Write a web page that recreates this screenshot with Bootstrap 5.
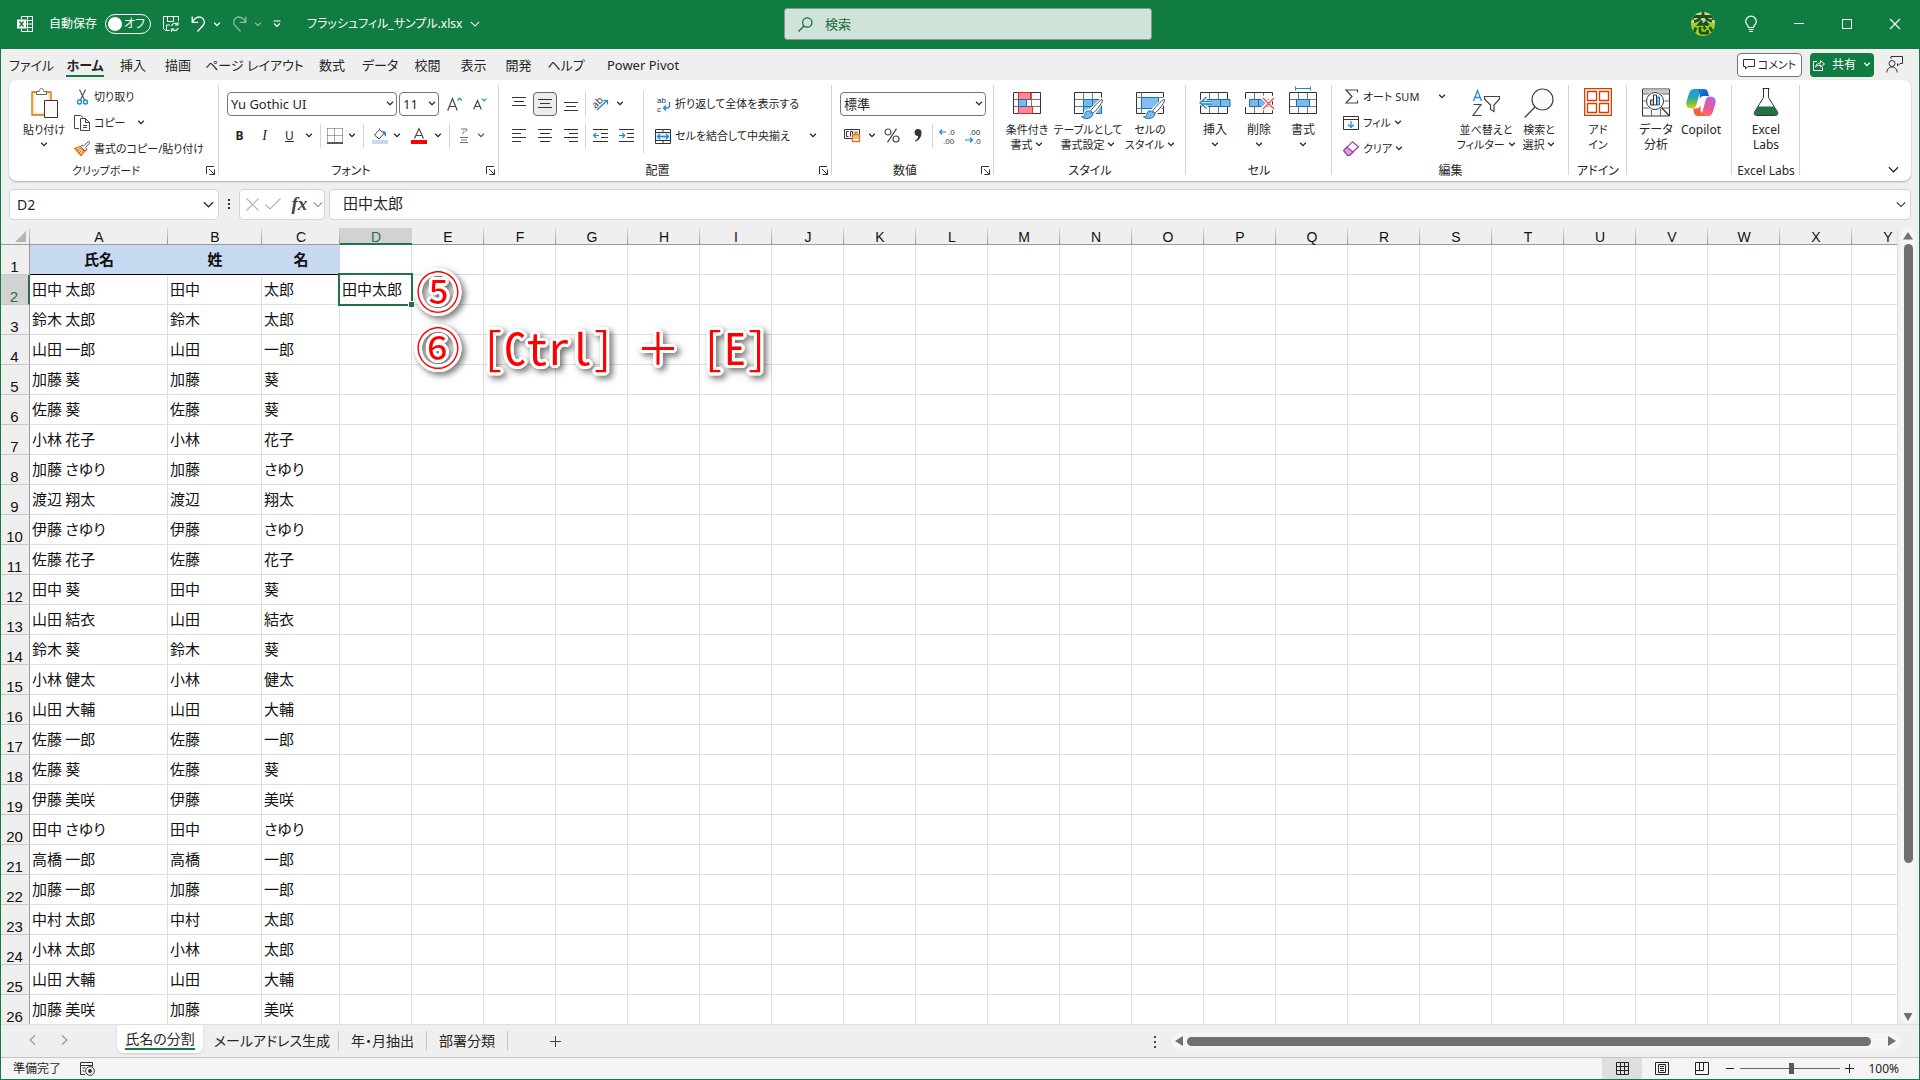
<!DOCTYPE html>
<html lang="ja">
<head>
<meta charset="utf-8">
<meta name="viewport" content="width=device-width, initial-scale=1">
<title>フラッシュフィル_サンプル.xlsx - Excel</title>
<link href="https://cdn.jsdelivr.net/npm/bootstrap@5.3.0/dist/css/bootstrap.min.css" rel="stylesheet">
<style>
:root{--xl-green:#107c41;--xl-sel:#217346;--xl-ink:#262626;--xl-line:#d4d4d4;--xl-bg:#efefef}
body{font-family:"Noto Sans","Noto Sans CJK JP",sans-serif;font-size:12px;line-height:16px;color:var(--xl-ink);background:var(--xl-bg);font-feature-settings:"palt"}
.xl-app{height:100vh;border:1px solid var(--xl-green);border-top:0;overflow:hidden}
button{background:none;border:0;padding:0;color:inherit;font:inherit;font-feature-settings:inherit;white-space:nowrap}
svg{display:block;flex:none;overflow:visible}
select,input{font-feature-settings:inherit}
/* title bar */
.xl-title{background:var(--xl-green);color:#fff;height:49px}
.xl-side{flex:1 1 0}
.xl-left{padding-left:16px}
.xl-toggle{width:46px;height:20px;border:1px solid #fff;border-radius:10px;padding:0 5px 0 2px}
.xl-toggle input{appearance:none;width:14px;height:14px;border-radius:50%;background:#fff;margin:0}
.xl-search{width:368px;height:32px;background:#cfe3d8;border:1px solid #8b938e;border-radius:3px;padding-left:13px;color:#1a6b40}
.xl-search input{background:none;border:0;outline:0;font-size:13px;color:#1a6b40;padding:0}
.xl-search input::placeholder{color:#1a6b40;opacity:1}
.xl-win{width:48px;height:48px}
/* ribbon tabs */
.xl-tabs{display:grid;grid-template-columns:55px 52px 44px 46px 107px 48px 48px 47px 45px 45px 50px 104px;padding-left:3px;font-size:13px}
.xl-tabs a{color:var(--xl-ink);text-decoration:none;white-space:nowrap;height:30px;line-height:16px;padding-top:8px;text-align:center}
.xl-tabs a.active span{font-weight:700;display:inline-block;padding-bottom:2px;border-bottom:2px solid var(--xl-green)}
.xl-cbtn{height:24px;border-radius:4px;padding:0 4px;gap:3px}
.xl-comment{width:65px;font-size:11px;justify-content:center}
.xl-share{width:64px;background:var(--xl-green);justify-content:center}
/* ribbon */
.xl-ribbon{background:#fff;border-radius:8px;margin:1px 8px 0;height:101px;box-shadow:0 1px 2px rgba(0,0,0,.28)}
.xl-group{position:relative;flex:none;height:101px}
.xl-group::after{content:"";position:absolute;right:0;top:5px;height:90px;width:1px;background:var(--xl-line)}
.xl-body{height:81px;display:flex}
.xl-cap{height:20px;line-height:20px;text-align:center}
.xl-cap.has-l{padding-right:16px}
.xl-launch{position:absolute;right:4px;bottom:6px}
.xl-big{padding-top:8px;display:flex;flex-direction:column;align-items:center}
.xl-big .ic{height:31px;margin-bottom:3px;display:flex;align-items:flex-start}
.xl-big .tx{line-height:15px;text-align:center}
.xl-big .tx svg{display:inline-block;vertical-align:2px}
.xl-big .dn{height:15px;display:flex;align-items:center}
.g-clip .tx,.g-style .tx,.g-edit .tx,.g-add .tx,.g-clip .xl-cap,.xl-three button,.xl-wide{font-size:11px}
.xl-three{padding-top:4px}
.xl-three>div{height:26px;display:flex;align-items:center}
.xl-three button{display:flex;align-items:center;gap:3px;padding-left:4px}
.xl-two{padding-top:8px}
.xl-two>div{height:32px;display:flex;align-items:center}
.xl-ib{width:26px;height:24px;display:inline-flex;align-items:center;justify-content:center;border-radius:4px;flex:none}
.xl-n{width:25px}.xl-s{width:20px}
.xl-in{margin-left:2px}
.xl-on{border:1px solid #666;background:#ebebeb;width:24px;margin:0 1px}
.xl-cv{width:14px;height:24px;display:inline-flex;align-items:center;justify-content:center;flex:none}
.xl-vs{width:1px;height:24px;background:var(--xl-line);margin:0 4px;flex:none}
.xl-vt{margin:0 1px}
.xl-tall{height:62px;margin-top:11px}
.xl-wide{display:flex;align-items:center;gap:4px;padding:1px 0 0 7px}
.xl-pick{height:24px;border:1px solid #767676;border-radius:4px;padding:0 16px 0 3px;font-size:13px;line-height:20px;color:var(--xl-ink);background:#fff url("data:image/svg+xml,%3Csvg xmlns='http://www.w3.org/2000/svg' viewBox='0 0 8 5'%3E%3Cpath d='M1 .8l3 3 3-3' fill='none' stroke='%23333' stroke-width='1.3'/%3E%3C/svg%3E") no-repeat right 2px center/8px 5px;appearance:none}
.w-font{width:170px}.w-size{width:40px;margin-left:2px}.w-num{width:146px}
.g-clip{width:210px}.g-clip .xl-body{padding-left:9px}
.g-font{width:280px}.g-align{width:333px}.g-num{width:162px}.g-style{width:192px}.g-cell{width:146px}.g-edit{width:237px}.g-add{width:58px}.g-data{width:105px}.g-labs{width:68px}
.g-align .xl-icons{padding-left:7px}
.g-cell .xl-body{padding-left:7px}
.g-edit .xl-body{padding-left:7px}.g-edit .xl-three{width:117px}
.bw-40{width:40px}.bw-44{width:44px}.bw-46{width:46px}.bw-50{width:50px}.bw-52{width:52px}.bw-60{width:60px}.bw-72{width:72px}
.xl-serif{font-family:"Liberation Serif",serif;font-style:italic;font-size:14px}
/* formula bar */
.xl-fbar{margin:8px 8px 0;height:31px}
.xl-box{background:#fff;border:1px solid var(--xl-line);border-radius:4px;height:31px}
.xl-box input{border:0;outline:0;background:none;padding:0;color:var(--xl-ink)}
.xl-name{width:210px;padding:0 4px 0 7px}.xl-name input{font-size:14px;width:150px;padding-top:2px}
.xl-fx{width:86px;padding:0 1px 0 6px}.xl-fx button{font-size:19px;font-weight:700;color:#444;margin-left:5px}
.xl-formula{padding:0 4px 0 13px;margin-left:4px}.xl-formula input{font-size:15px;padding-bottom:3px}
/* grid */
.xl-grid{margin-top:8px;min-height:0}
.xl-view{overflow:hidden;background:#fff;position:relative;border-right:1px solid #e0e0e0}
.xl-sheet{table-layout:fixed;border-collapse:separate;border-spacing:0;width:0;font:15px/20px "Noto Sans CJK JP",sans-serif;font-feature-settings:"palt";color:#111}
.xl-sheet col{width:72px}
.xl-sheet col.c-n{width:29px}.xl-sheet col.c-a{width:138px}.xl-sheet col.c-b{width:94px}.xl-sheet col.c-c{width:78px}
.xl-sheet th,.xl-sheet td{padding:0;white-space:nowrap;border:0 solid #dedede;font-weight:400}
.xl-sheet thead th{height:17px;padding-top:2px;line-height:14px;font-family:"Liberation Sans",sans-serif;font-size:14px;text-align:center;border-bottom:1px solid #9b9b9b;background:linear-gradient(#d8d8d8,#9b9b9b) right/1px 100% no-repeat var(--xl-bg)}
.xl-sheet thead th:first-child{padding-top:0}
.xl-sheet thead th.on{background:#d2d2d2;color:#217346;border-bottom-color:var(--xl-sel);box-shadow:inset 0 -1px var(--xl-sel)}
.xl-sheet tbody th{height:30px;font-family:"Liberation Sans",sans-serif;font-size:15px;line-height:14px;text-align:center;vertical-align:bottom;background:var(--xl-bg);border-right:1px solid #9b9b9b;border-bottom:1px solid #c8c8c8;padding-right:1px}
.xl-sheet tbody th.on{background:#d2d2d2;color:#217346;border-right:2px solid var(--xl-sel)}
.xl-sheet td{border-width:0 1px 1px 0;padding-left:2px;vertical-align:middle}
.xl-sheet td.hd{background:#c6d9f1;border-color:#000;border-right:0;text-align:center;font-weight:700;padding:0}
.xl-sheet td.cur{position:relative}
.xl-sheet td.cur::before{content:"";position:absolute;inset:-2px;border:2px solid var(--xl-sel)}
.xl-sheet td.cur::after{content:"";position:absolute;right:-3px;bottom:-3px;width:6px;height:6px;background:var(--xl-sel);border:solid #fff;border-width:1px 0 0 1px}
.xl-note{position:absolute;left:415px;top:34px;font:44px/56px "Noto Sans CJK JP",sans-serif;font-feature-settings:"hwid";color:#f00;white-space:pre;pointer-events:none;filter:drop-shadow(3px 3px 3px rgba(0,0,0,.55));
text-shadow:3px 0 #fff,-3px 0 #fff,0 3px #fff,0 -3px #fff,2px 2px #fff,-2px 2px #fff,2px -2px #fff,-2px -2px #fff,1px 3px #fff,-1px 3px #fff,1px -3px #fff,-1px -3px #fff,3px 1px #fff,-3px 1px #fff,3px -1px #fff,-3px -1px #fff}
.xl-full{font-feature-settings:"fwid"}
.xl-vbar{width:21px;padding:0 3px 0 2px}
.xl-vbar>div{background:#f5f5f5;border-radius:8px;padding:4px 0 3px;height:100%}
.xl-vthumb{width:9px;background:#707070;border-radius:5px;flex:0 0 619px;margin-top:4px}
/* sheet tabs */
.xl-sheets{height:33px;border-top:1px solid #e0e0e0;font-size:14px;padding-right:18px}
.xl-nav{width:116px;height:30px;padding-left:28px;gap:25px}
.xl-sheets a{color:var(--xl-ink);text-decoration:none;text-align:center;white-space:nowrap;height:20px;line-height:20px;margin-top:6px;border-right:1px solid #c8c8c8}
.xl-sheets a.active{background:#fff;height:28px;margin:0 3px 0 0;padding-top:4px;border:0;border-radius:0 0 6px 6px;width:86px;box-shadow:0 1px 2px rgba(0,0,0,.15)}
.xl-sheets a.active span{display:inline-block;border-bottom:2px solid var(--xl-green);line-height:19px;height:21px}
.xl-t2{width:133px}.xl-t3{width:88px}.xl-t4{width:81px}
.xl-plus{margin:11px 0 0 42px}
.xl-dots{margin:11px 14px 0 auto}
.xl-hbar{width:730px;height:16px;background:#f5f5f5;border-radius:8px;margin-top:8px;padding:0 5px 0 4px}
.xl-hthumb{height:9px;flex:0 0 684px;background:#707070;border-radius:5px;margin-left:4px}
.xl-status{height:22px;background:#f4f4f4;border-top:1px solid #c6c6c6;padding:0 20px 0 12px}
.xl-rec{margin-left:19px}
.xl-vw{width:40px;height:21px;display:flex;align-items:center;justify-content:center}
.xl-vw.on{background:#dfdfdf}
.xl-zoom{appearance:none;width:100px;height:20px;background:linear-gradient(#666,#666) center/100% 1px no-repeat;margin:0 5px}
.xl-zoom::-webkit-slider-thumb{appearance:none;width:5px;height:11px;background:#595959}
.xl-pct{width:45px}
.tiny{font:8px "Liberation Sans",sans-serif;fill:#333}
</style>
<script src="https://cdn.jsdelivr.net/npm/bootstrap@5.3.0/dist/js/bootstrap.bundle.min.js"></script>
</head>
<body>
<svg width="0" height="0" class="position-absolute" aria-hidden="true">
<defs>
<symbol id="cv" viewBox="0 0 8 5"><path d="M1.2.8L4 3.6 6.8.8" fill="none" stroke="currentColor" stroke-width="1.3"/></symbol>
<symbol id="cvl" viewBox="0 0 12 7"><path d="M1 1l5 5 5-5" fill="none" stroke="currentColor" stroke-width="1.3"/></symbol>
<symbol id="la" viewBox="0 0 9 9"><path d="M8 .5H.5V8M3 3l5 5M8.500 3.500v5h-5" fill="none" stroke="#333"/></symbol>
<symbol id="grid" viewBox="0 0 28 22"><path d="M.5.5h27v21H.500z" fill="#fafafa"/><path d="M9.500.5v21M18.500.5v21M.5 7.500h27M.5 14.500h27" stroke="#777" fill="none"/><path d="M.5.5h27v21H.500z" fill="none" stroke="#333"/></symbol>
<symbol id="brush" viewBox="0 0 24 24"><path d="M22 3L9.500 15.500l3 3L22 5.500c1-1.500 0-2.500 0-2.500z" fill="#fff" stroke="#fff" stroke-width="4"/><path d="M9 14c-3-.5-4.500 2-4.500 4S3 20.500 1 20.500c3 3.500 11 3 12-3z" fill="#7cb8ea" stroke="#fff" stroke-width="3"/><path d="M22.500 2.500c-3 1.500-9 8-12 12l2.500 2.500c4-3.500 9-10 10-13 .3-1-.5-1.500-.5-1.500z" fill="#fff" stroke="#444"/><path d="M9 14.500c-3-.5-4.500 1.500-4.500 3.500S3 20.500 1 20.500c3 3 11 3 12-3z" fill="#7cb8ea" stroke="#1272bd"/></symbol>
</defs>
</svg>

<div class="xl-app d-flex flex-column">
<header class="xl-title d-flex align-items-center">
 <div class="xl-side xl-left d-flex align-items-center">
  <svg width="16" height="16" viewBox="0 0 16 16"><path d="M4.500 3V.5h11v15h-11V13M10.500.5v15M4.500 4.500h11M9 8h6.500M4.500 11.500h11" fill="none" stroke="#fff"/><path d="M0 3.500h9v9H0z" fill="#fff"/><path d="M2.500 5.500l4 5M6.500 5.500l-4 5" stroke="#107c41" stroke-width="1.400"/></svg>
  <label for="autosave" class="ms-3">自動保存</label>
  <span class="xl-toggle d-flex align-items-center justify-content-between ms-2"><input type="checkbox" id="autosave" role="switch"><span>オフ</span></span>
  <button class="ms-2 ps-1" aria-label="保存"><svg width="16" height="16" viewBox="0 0 16 16"><path d="M15.500 5V.5H.5v12l2 2H7M4.500.5v5h6v-5M3.500 14v-5H7" fill="none" stroke="#fff"/><path d="M8.500 10a3.500 3.500 0 0 1 6-1.500M15 6v3h-3M15 12a3.500 3.500 0 0 1-6 1.500M8.500 16v-3h3" fill="none" stroke="#fff" stroke-width="1.100"/></svg></button>
  <button class="ms-2 ps-1 xl-undo" aria-label="元に戻す"><svg width="15" height="16" viewBox="0 0 14 16"><path d="M.7.5v5.800h6M1 6c2-4 6-6 9-4.500 3.500 2 3.500 5.500 1.500 8L6 15.500" fill="none" stroke="#fff" stroke-width="1.300"/></svg></button>
  <span class="xl-cv ms-1"><svg width="8" height="5"><use href="#cv"/></svg></span>
  <button class="ms-2 opacity-50" aria-label="やり直し"><svg width="15" height="16" viewBox="0 0 14 16"><path d="M13.300.5v5.800h-6M13 6C11 2 7 0 4 1.500 .5 3.500.5 7 2.500 9.500L8 15.500" fill="none" stroke="#fff" stroke-width="1.300"/></svg></button>
  <span class="xl-cv ms-1 opacity-50"><svg width="8" height="5"><use href="#cv"/></svg></span>
  <button class="ms-2" aria-label="クイック アクセス"><svg width="8" height="8" viewBox="0 0 8 8"><path d="M.5 1h7M1.200 3.500L4 6.300l2.800-2.800" fill="none" stroke="#fff" stroke-width="1.200"/></svg></button>
  <button class="ms-4 xl-in d-flex align-items-center gap-2"><span class="xl-in">フラッシュフィル_サンプル.xlsx</span><svg width="10" height="6"><use href="#cvl"/></svg></button>
 </div>
 <div class="xl-search d-flex align-items-center">
  <svg width="15" height="15" viewBox="0 0 15 15" class="me-2"><path d="M.5 14.500l5.500-5.500" stroke="#1a6b40" stroke-width="1.200"/><circle cx="9.300" cy="5.500" r="4.700" fill="none" stroke="#1a6b40" stroke-width="1.200"/></svg>
  <input type="search" aria-label="検索" placeholder="検索" class="ms-1">
 </div>
 <div class="xl-side d-flex align-items-center justify-content-end">
  <button aria-label="アカウント" class="me-2"><svg width="24" height="24" viewBox="0 0 24 24"><defs><clipPath id="av"><circle cx="12" cy="12" r="12"/></clipPath></defs><g clip-path="url(#av)"><path d="M0 0h24v24H0z" fill="#9fce1f"/><path d="M0 0h24v11H0z" fill="#c5d89a"/><path d="M12 0v4M1.500 7.500V4.500h21V8M9 5.500C8.500 8 6 9 3 9.500M15 5.500c.5 2.500 2.500 3 6 3.500M11 8.500L8 12.500l8-.5M14 9.500l3.500 4M5 15.500l-2 5M9 15v3.500c0 3 2 3 7.500 2.500V18M12.500 14.500l2 3M18.500 15l3 4.500" fill="none" stroke="#1f5219" stroke-width="2.800"/></g></svg></button>
  <button class="xl-win d-flex align-items-center justify-content-center ms-1" aria-label="ヒント"><svg width="12" height="16" viewBox="0 0 12 16"><path d="M3.500 11.500C3.500 9 .7 8.500.7 5.500a5.300 5.300 0 0 1 10.600 0c0 3-2.800 3.500-2.800 6zM3.500 13.500h5M4.200 15.500h3.600" fill="none" stroke="#fff" stroke-width="1.200"/></svg></button>
  <button class="xl-win d-flex align-items-center justify-content-center" aria-label="最小化"><svg width="10" height="10"><path d="M0 4.500h10" stroke="#fff"/></svg></button>
  <button class="xl-win d-flex align-items-center justify-content-center" aria-label="最大化"><svg width="10" height="10"><path d="M.5.5h9v9h-9z" fill="none" stroke="#fff"/></svg></button>
  <button class="xl-win d-flex align-items-center justify-content-center" aria-label="閉じる"><svg width="10" height="10"><path d="M0 0l10 10M10 0L0 10" stroke="#fff" stroke-width="1.200"/></svg></button>
 </div>
</header>

<div class="d-flex align-items-start justify-content-between">
 <nav class="xl-tabs">
  <a href="#">ファイル</a><a href="#" class="active"><span>ホーム</span></a><a href="#">挿入</a><a href="#">描画</a><a href="#">ページ レイアウト</a><a href="#">数式</a><a href="#">データ</a><a href="#">校閲</a><a href="#">表示</a><a href="#">開発</a><a href="#">ヘルプ</a><a href="#">Power Pivot</a>
 </nav>
 <div class="d-flex align-items-center gap-2 pt-1 pe-3">
  <button class="xl-cbtn xl-comment d-flex align-items-center bg-white border border-secondary"><svg width="12" height="11" viewBox="0 0 12 11"><path d="M.5.5h11v7H5L2.500 10V7.500h-2z" fill="none" stroke="#333"/></svg>コメント</button>
  <button class="xl-cbtn xl-share d-flex align-items-center text-white"><svg width="12" height="12" viewBox="0 0 12 12"><path d="M4 2.500H.5v9h9V8M2.500 8c.5-3 3-4 5-4V1.500L11.500 5 7.500 8V6c-2 0-3.500.5-5 2z" fill="none" stroke="#fff"/></svg><span class="mx-1">共有</span><svg width="8" height="5"><use href="#cv"/></svg></button>
  <button aria-label="フィードバック" class="ms-1"><svg width="17" height="17" viewBox="0 0 17 17"><circle cx="6" cy="7.500" r="3" fill="none" stroke="#333"/><path d="M.7 16.500c.5-4 2.800-5.500 5.300-5.500s4.800 1.500 5.300 5.500M5 3V.5h11.500v7H14L11.500 10V7.500" fill="none" stroke="#333"/></svg></button>
 </div>
</div>

<section class="xl-ribbon d-flex">
 <div class="xl-group g-clip">
  <div class="xl-body">
   <button class="xl-big bw-52"><span class="ic"><svg width="27" height="30" viewBox="0 0 27 30"><path d="M1 4h19v23H1z" fill="#fbe3b9" stroke="#d9730d" stroke-width="1.300"/><path d="M3.500 6.500h14v18h-14z" fill="#fff"/><path d="M5.500 6.500v-3h2.700c.3-4 4.300-4 4.600 0h2.700v3z" fill="#fff" stroke="#666"/><path d="M13.500 12.500h13v17h-13z" fill="#fafafa" stroke="#333"/></svg></span><span class="tx">貼り付け</span><span class="dn"><svg width="8" height="5"><use href="#cv"/></svg></span></button>
   <div class="xl-three">
    <div><button><svg width="17" height="16" viewBox="0 0 17 16"><path d="M5.500.5l5 10.500M11.500.5l-5 10.500" stroke="#555" stroke-width="1.200"/><circle cx="5.500" cy="13" r="2" fill="none" stroke="#1e88d0" stroke-width="1.300"/><circle cx="11.500" cy="13" r="2" fill="none" stroke="#1e88d0" stroke-width="1.300"/></svg>切り取り</button></div>
    <div><button><svg width="17" height="16" viewBox="0 0 17 16"><path d="M5 13.500H.5V.5h6l2.500 2M6.500 3.500h5l4 4v8h-9zM11.500 3.500v4h4M9 10.500h4M9 12.500h4" fill="none" stroke="#444"/></svg>コピー</button><span class="xl-cv ms-2"><svg width="8" height="5"><use href="#cv"/></svg></span></div>
    <div><button><svg width="17" height="16" viewBox="0 0 17 16"><path d="M9.500 5L14 .8c1-.8 2.200.4 1.400 1.400L11.500 6.500l1.500 2-2 1.500L6.500 5.500 8 4z" fill="#fff" stroke="#555"/><path d="M6 5.500L.8 7.500 7 14.500l3.500-4z" fill="#f8c48a" stroke="#d9730d" stroke-width="1.200"/><path d="M2.500 9.500l3-1M4.500 12l3-2" stroke="#d9730d"/></svg>書式のコピー/貼り付け</button></div>
   </div>
  </div>
  <div class="xl-cap has-l">クリップボード</div><svg class="xl-launch" width="9" height="9"><use href="#la"/></svg>
 </div>

 <div class="xl-group g-font">
  <div class="xl-body"><div class="xl-two ps-2">
   <div><select class="xl-pick w-font" aria-label="フォント"><option>Yu Gothic UI</option></select><select class="xl-pick w-size" aria-label="サイズ"><option>11</option></select>
    <button class="xl-ib xl-in" aria-label="拡大"><svg width="15" height="14" viewBox="0 0 15 14"><path d="M.7 13.500L5.500 1.500l4.800 12M2.300 9.500h6.400" fill="none" stroke="#444" stroke-width="1.200"/><path d="M10.500 3.500L12.700 1.200l2.200 2.300" fill="none" stroke="#1e88d0" stroke-width="1.200"/></svg></button>
    <button class="xl-ib" aria-label="縮小"><svg width="14" height="12" viewBox="0 0 14 12"><path d="M.7 11.500L4.500 2.500l3.800 9M2 8.500h5" fill="none" stroke="#444" stroke-width="1.200"/><path d="M9 .7L11.200 3 13.400.7" fill="none" stroke="#1e88d0" stroke-width="1.200"/></svg></button></div>
   <div><button class="xl-ib xl-n fw-bold">B</button><button class="xl-ib xl-n xl-serif">I</button><button class="xl-ib xl-n text-decoration-underline">U</button><span class="xl-cv"><svg width="8" height="5"><use href="#cv"/></svg></span><i class="xl-vs"></i>
    <button class="xl-ib xl-s" aria-label="罫線"><svg width="16" height="16" viewBox="0 0 16 16"><path d="M.5.5h15M.5 7.500h15M.5.5v13M7.500.5v13M15.500.5v13" stroke="#555" stroke-dasharray="1 1" fill="none"/><path d="M0 15h16" stroke="#222" stroke-width="1.500"/></svg></button><span class="xl-cv"><svg width="8" height="5"><use href="#cv"/></svg></span><i class="xl-vs"></i>
    <button class="xl-ib xl-s xl-in" aria-label="塗りつぶし"><svg width="16" height="16" viewBox="0 0 16 16"><path d="M7.500 1.500L2.500 7l4.500 4 5-5.500zM7.500 1.500V.5" fill="#fff" stroke="#444"/><path d="M10.500 3c3 0 4 2 3.500 6-1-1-2-3-2-4z" fill="#1e6fb8"/><path d="M0 12h16v4H0z" fill="#c6d9f1"/></svg></button><span class="xl-cv"><svg width="8" height="5"><use href="#cv"/></svg></span>
    <button class="xl-ib xl-n xl-in" aria-label="文字色"><svg width="16" height="16" viewBox="0 0 16 16"><path d="M3.500 10.500L8 .5l4.500 10M5 7.500h6" fill="none" stroke="#444" stroke-width="1.100"/><path d="M0 12h16v4H0z" fill="#f00"/></svg></button><span class="xl-cv"><svg width="8" height="5"><use href="#cv"/></svg></span><i class="xl-vs"></i>
    <button class="xl-ib xl-s opacity-75" aria-label="ふりがな"><svg width="10" height="16" viewBox="0 0 10 16"><path d="M2 1h6c0 1.500-1 2.500-2 3M5 2.500c0 2-.7 3-2 3.800M1 9.500h8M2 12h6M1 14.500h8" fill="none" stroke="#444"/></svg></button><span class="xl-cv opacity-75"><svg width="8" height="5"><use href="#cv"/></svg></span></div>
  </div></div>
  <div class="xl-cap has-l">フォント</div><svg class="xl-launch" width="9" height="9"><use href="#la"/></svg>
 </div>

 <div class="xl-group g-align">
  <div class="xl-body"><div class="xl-two xl-icons">
   <div><button class="xl-ib" aria-label="上揃え"><svg width="14" height="14"><path d="M0 .5h14M2 4.500h10M0 8.500h14" stroke="#333"/></svg></button><button class="xl-ib xl-on" aria-label="中央"><svg width="14" height="14"><path d="M0 2.500h14M2 6.500h10M0 10.500h14" stroke="#333"/></svg></button><button class="xl-ib" aria-label="下揃え"><svg width="14" height="14"><path d="M0 5.500h14M2 9.500h10M0 13.500h14" stroke="#333"/></svg></button><i class="xl-vs xl-vt"></i><button class="xl-ib" aria-label="方向"><svg width="17" height="15" viewBox="0 0 17 15"><text x="-1" y="10" font-size="10" fill="#444" transform="rotate(-45 5 6)">ab</text><path d="M5 14L15 4.500M11.500 4.500H15.500V8.500" fill="none" stroke="#1e88d0" stroke-width="1.200"/></svg></button><span class="xl-cv"><svg width="8" height="5"><use href="#cv"/></svg></span></div>
   <div><button class="xl-ib" aria-label="左揃え"><svg width="14" height="14"><path d="M0 .5h14M0 4.500h9M0 8.500h14M0 12.500h9" stroke="#333"/></svg></button><button class="xl-ib" aria-label="中央揃え"><svg width="14" height="14"><path d="M0 .5h14M2 4.500h10M0 8.500h14M2 12.500h10" stroke="#333"/></svg></button><button class="xl-ib" aria-label="右揃え"><svg width="14" height="14"><path d="M0 .5h14M5 4.500h9M0 8.500h14M5 12.500h9" stroke="#333"/></svg></button><i class="xl-vs xl-vt"></i><button class="xl-ib" aria-label="インデント減"><svg width="15" height="14"><path d="M0 .5h15M8 4.500h7M8 8.500h7M0 12.500h15" stroke="#333"/><path d="M6 6.500H.7M3 4L.6 6.500 3 9" fill="none" stroke="#1e88d0" stroke-width="1.200"/></svg></button><button class="xl-ib" aria-label="インデント増"><svg width="15" height="14"><path d="M0 .5h15M8 4.500h7M8 8.500h7M0 12.500h15" stroke="#333"/><path d="M0 6.500h5.500M3.300 4l2.400 2.500L3.300 9" fill="none" stroke="#1e88d0" stroke-width="1.200"/></svg></button></div>
  </div>
  <i class="xl-vs xl-tall"></i>
  <div class="xl-two">
   <div><button class="xl-wide"><svg width="16" height="16" viewBox="0 0 16 16"><text class="tiny" x="2" y="7">ab</text><text class="tiny" x="2" y="16">c</text><path d="M14.500 6v3.500c0 2-1 2.500-3 2.500H8.500M11 9.500L8.500 12l2.500 2.500" fill="none" stroke="#1e88d0" stroke-width="1.300"/></svg>折り返して全体を表示する</button></div>
   <div><button class="xl-wide"><svg width="16" height="15" viewBox="0 0 16 15"><path d="M.5.5h15v14H.500zM.5 3.500h15M.5 11.500h15M8 .5v3M8 11.500v3" fill="#fff" stroke="#333"/><path d="M1 4h14v7H1z" fill="#dbeefc"/><path d="M2.500 7.500h11M5 5L2.500 7.500 5 10M11 5l2.500 2.500L11 10" fill="none" stroke="#1e88d0" stroke-width="1.300"/></svg>セルを結合して中央揃え</button><span class="xl-cv ms-3"><svg width="8" height="5"><use href="#cv"/></svg></span></div>
  </div></div>
  <div class="xl-cap has-l">配置</div><svg class="xl-launch" width="9" height="9"><use href="#la"/></svg>
 </div>

 <div class="xl-group g-num">
  <div class="xl-body"><div class="xl-two ps-2">
   <div><select class="xl-pick w-num" aria-label="表示形式"><option>標準</option></select></div>
   <div><button class="xl-ib xl-n" aria-label="通貨"><svg width="17" height="15" viewBox="0 0 17 15"><path d="M.5 1.500h15v9H.500z" fill="#fff" stroke="#333"/><path d="M4.500 3.500h-2v5h2M6.500 8.500v-5h2v5M11 3.500v3M13 3.500v2" fill="none" stroke="#333"/><path d="M8.500 6.500h7v7h-7z" fill="#fff" stroke="#e07b1a" stroke-width="1.400"/><path d="M8.500 10h7M8.500 8h7" stroke="#e07b1a"/></svg></button><span class="xl-cv"><svg width="8" height="5"><use href="#cv"/></svg></span><button class="xl-ib" aria-label="パーセント"><svg width="16" height="15" viewBox="0 0 16 15"><circle cx="4" cy="4" r="3" fill="none" stroke="#444" stroke-width="1.200"/><circle cx="12" cy="11" r="3" fill="none" stroke="#444" stroke-width="1.200"/><path d="M12.500.7L3.500 14.300" stroke="#444" stroke-width="1.200"/></svg></button><button class="xl-ib" aria-label="桁区切り"><svg width="8" height="13" viewBox="0 0 8 13"><path d="M4 0a3.500 3.500 0 0 1 3.500 3.500C7.500 8 5 11.500 1.500 12.500L1 11.500c2-1 3-2.500 3.200-4.500A3.500 3.500 0 1 1 4 0z" fill="#333"/></svg></button><i class="xl-vs xl-vt"></i><button class="xl-ib" aria-label="小数点以下を増やす"><svg width="16" height="16" viewBox="0 0 16 16"><path d="M7 4H.7M3.200 1.500L.7 4l2.500 2.500" fill="none" stroke="#1e88d0" stroke-width="1.200"/><text class="tiny" x="9" y="7">.0</text><text class="tiny" x="4" y="16">.00</text></svg></button><button class="xl-ib" aria-label="小数点以下を減らす"><svg width="16" height="16" viewBox="0 0 16 16"><path d="M0 12h7.500M5 9.500L7.500 12 5 14.500" fill="none" stroke="#1e88d0" stroke-width="1.200"/><text class="tiny" x="4" y="7">.00</text><text class="tiny" x="9" y="16">.0</text></svg></button></div>
  </div></div>
  <div class="xl-cap has-l">数値</div><svg class="xl-launch" width="9" height="9"><use href="#la"/></svg>
 </div>

 <div class="xl-group g-style">
  <div class="xl-body ps-2">
   <button class="xl-big bw-50"><span class="ic pt-1"><svg width="28" height="22"><use href="#grid"/><path d="M5.500.5h12v7h-12zM5.500 14.500h14v7h-14z" fill="#ff8a8f" stroke="#d92b2b"/><path d="M5.500 7.500h8v7h-8z" fill="#7cb8ea" stroke="#1272bd"/></svg></span><span class="tx">条件付き<br>書式 <svg width="8" height="5"><use href="#cv"/></svg></span></button>
   <button class="xl-big bw-72"><span class="ic pt-1"><svg width="28" height="27"><use href="#grid" width="28" height="22"/><path d="M9.500 7.500h18v14h-18z" fill="#7cb8ea"/><path d="M9.500 14.500h18M18.500 7.500v14M9.500 21.500v-14h18v14z" fill="none" stroke="#1272bd"/><use href="#brush" x="6" y="5" width="24" height="23"/></svg></span><span class="tx">テーブルとして<br>書式設定 <svg width="8" height="5"><use href="#cv"/></svg></span></button>
   <button class="xl-big bw-52"><span class="ic pt-1"><svg width="28" height="27"><path d="M.5.5h27v21H.500z" fill="#fafafa" stroke="#333"/><path d="M5.500.5v21M.5 5.500h27M.5 16.500h27" stroke="#777"/><path d="M5.500 5.500h17v11h-17z" fill="#84bdee" stroke="#1272bd"/><use href="#brush" x="6" y="5" width="24" height="23"/></svg></span><span class="tx">セルの<br>スタイル <svg width="8" height="5"><use href="#cv"/></svg></span></button>
  </div>
  <div class="xl-cap">スタイル</div>
 </div>

 <div class="xl-group g-cell">
  <div class="xl-body">
   <button class="xl-big bw-44"><span class="ic pt-1"><svg width="30" height="22"><use href="#grid" width="28" height="22"/><path d="M6 7.500h24v7H6z" fill="#7cb8ea" stroke="#1272bd"/><path d="M12 10.500H1M7 4.500L.5 10.500 7 16.500" fill="none" stroke="#fff" stroke-width="4"/><path d="M12 9.500H1.500M12 12H1.500M6.500 5L0 10.700l6.500 5.700" fill="none" stroke="#1e88d0" stroke-width="1.300"/><path d="M20.500 7.500v7" stroke="#1272bd"/></svg></span><span class="tx">挿入</span><span class="dn"><svg width="8" height="5"><use href="#cv"/></svg></span></button>
   <button class="xl-big bw-44"><span class="ic pt-1"><svg width="28" height="22"><use href="#grid" width="28" height="22"/><path d="M0 7h5v8H0z" fill="#fff"/><path d="M4.500 7.500h12l4 3.500-4 3.500h-12zM13.500 7.500v7" fill="#7cb8ea" stroke="#1272bd"/><path d="M17 5l12 12M29 5L17 17" stroke="#fff" stroke-width="4"/><path d="M18 6l11 11M29 6L18 17" stroke="#f0524f" stroke-width="1.400"/></svg></span><span class="tx">削除</span><span class="dn"><svg width="8" height="5"><use href="#cv"/></svg></span></button>
   <button class="xl-big bw-44"><span class="ic pt-1"><svg width="28" height="22"><use href="#grid"/><path d="M7.500 7.500h13v7h-13z" fill="#7cb8ea" stroke="#1272bd"/><path d="M6.500-3.500h15M6.500-5.500v4M21.500-5.500v4" stroke="#1e88d0"/></svg></span><span class="tx">書式</span><span class="dn"><svg width="8" height="5"><use href="#cv"/></svg></span></button>
  </div>
  <div class="xl-cap">セル</div>
 </div>

 <div class="xl-group g-edit">
  <div class="xl-body">
   <div class="xl-three">
    <div><button><svg width="17" height="16" viewBox="0 0 17 16"><path d="M14.500 3.500V1H3l6 6.500L3 14h11.500v-2.500" fill="none" stroke="#444" stroke-width="1.200"/></svg>オート SUM</button><span class="xl-cv ms-3"><svg width="8" height="5"><use href="#cv"/></svg></span></div>
    <div><button><svg width="17" height="14" viewBox="0 0 17 14"><path d="M.5.5h15v13H.500zM.5 3.500h15" fill="none" stroke="#333"/><path d="M8 5v6.500M5 8.500l3 3 3-3" fill="none" stroke="#1e88d0" stroke-width="1.200"/></svg>フィル <svg width="8" height="5"><use href="#cv"/></svg></button></div>
    <div><button><svg width="17" height="15" viewBox="0 0 17 15"><path d="M.7 9.500L9.500.7l6 5L6.500 14.300H4.500z" fill="#fff" stroke="#9b3fa5" stroke-width="1.200"/><path d="M.7 9.500l3.300-3.500 6 5-3.500 3.300h-2z" fill="#d9a6dd" stroke="#9b3fa5" stroke-width="1.200"/></svg>クリア <svg width="8" height="5"><use href="#cv"/></svg></button></div>
   </div>
   <button class="xl-big bw-60"><span class="ic"><svg width="28" height="28" viewBox="0 0 28 28"><path d="M1.500 13L5.500 2.500 9.500 13M2.800 9.500h5.400" fill="none" stroke="#1e88d0" stroke-width="1.300"/><path d="M1.500 16.500h7.500L1 27.500h8.500" fill="none" stroke="#444" stroke-width="1.200"/><path d="M12.500 8.500h15v2.500l-5.500 6v6.500l-3.500-2v-4.500l-6-6z" fill="#fafafa" stroke="#444" stroke-width="1.200"/></svg></span><span class="tx">並べ替えと<br>フィルター <svg width="8" height="5"><use href="#cv"/></svg></span></button>
   <button class="xl-big bw-46"><span class="ic"><svg width="30" height="30" viewBox="0 0 30 30"><circle cx="18.500" cy="11.500" r="10.500" fill="#fafafa" stroke="#444" stroke-width="1.200"/><path d="M11 19L.7 29.500" stroke="#444" stroke-width="1.300"/></svg></span><span class="tx">検索と<br>選択 <svg width="8" height="5"><use href="#cv"/></svg></span></button>
  </div>
  <div class="xl-cap">編集</div>
 </div>

 <div class="xl-group g-add">
  <div class="xl-body justify-content-center"><button class="xl-big"><span class="ic"><svg width="28" height="28" viewBox="0 0 28 28"><path d="M.7.7h26.600v26.600H.700z" fill="#fff" stroke="#d83b01" stroke-width="1.300"/><path d="M3.500 3.500h9v9h-9zM15.500 3.500h9v9h-9zM3.500 15.500h9v9h-9zM15.500 15.500h9v9h-9z" fill="#fff" stroke="#d83b01" stroke-width="1.300"/></svg></span><span class="tx">アド<br>イン</span></button></div>
  <div class="xl-cap">アドイン</div>
 </div>

 <div class="xl-group g-data">
  <div class="xl-body ps-1">
   <button class="xl-big bw-50"><span class="ic"><svg width="28" height="29" viewBox="0 0 28 28"><path d="M.5.5h27v27H.500z" fill="#fafafa" stroke="#333"/><path d="M1 1h26v4H1z" fill="#c8c8c8"/><path d="M.5 5.500h27M.5 12.500h27M.5 19.500h27M9.500 19.500v8M18.500 19.500v8" stroke="#666" fill="none"/><circle cx="13" cy="12.500" r="9.500" fill="#fff"/><circle cx="13" cy="12.500" r="8.500" fill="#fff" stroke="#333"/><path d="M19.500 19l7.500 8" stroke="#333" stroke-width="1.200"/><path d="M8.500 11.500h3v5h-3z" fill="#ccc" stroke="#333"/><path d="M14.500 8.500h3v8h-3z" fill="#7cb8ea" stroke="#1272bd"/><path d="M11.500 6.500h3v10h-3z" fill="#fff" stroke="#333"/></svg></span><span class="tx">データ<br>分析</span></button>
   <button class="xl-big bw-40"><span class="ic"><svg width="30" height="29" viewBox="0 0 30 28"><defs><linearGradient id="ca" x1="0" y1="0" x2="0" y2="1"><stop offset="0" stop-color="#16a3ea"/><stop offset=".45" stop-color="#2aa7a4"/><stop offset=".75" stop-color="#7ac143"/><stop offset="1" stop-color="#f0c800"/></linearGradient><linearGradient id="cb" x1="0" y1="1" x2=".8" y2="0"><stop offset="0" stop-color="#ff8a3c"/><stop offset=".45" stop-color="#f25a8a"/><stop offset="1" stop-color="#b266e6"/></linearGradient><linearGradient id="cc" x1="0" y1="0" x2="1" y2="1"><stop offset="0" stop-color="#1590e0"/><stop offset="1" stop-color="#1746b8"/></linearGradient></defs><path d="M8 .5h10c-3 0-4 3-5 6.500L10.500 16c-1 3.500-3 4-5 4C1.500 20-.5 17 .5 13L3 5C4 2 5.500.5 8 .5z" fill="url(#ca)"/><path d="M9.500.5H18c2.500 0 3.500 1.500 4.200 4l.8 3h-5c-2.500 0-4 1.500-4.500 4 .5-5 .5-9-4-11z" fill="url(#cc)"/><path d="M22 27.500H12c3 0 4-3 5-6.500l2.500-9c1-3.500 3-4 5-4 4 0 6 3 5 7L27 23c-1 3-2.500 4.500-5 4.500z" fill="url(#cb)"/><path d="M20.500 27.500H12c-2.500 0-3.500-1.500-4.200-4L7 20c4 0 6 0 8-3-1 4-1 8.500 5.500 10.500z" fill="#f2603c"/></svg></span><span class="tx">Copilot</span></button>
  </div>
 </div>

 <div class="xl-group g-labs">
  <div class="xl-body justify-content-center"><button class="xl-big"><span class="ic"><svg width="26" height="28" viewBox="0 0 26 28"><path d="M9.500.5h7M10.500.5v9L1.500 24c-1 2 0 3.500 2 3.500h19c2 0 3-1.500 2-3.500L15.500 9.500v-9" fill="#fff" stroke="#333"/><path d="M5 18.500h16l3.500 5.800c.8 1.700 0 2.700-1.500 2.700H3c-1.500 0-2.300-1-1.500-2.700z" fill="#217346"/></svg></span><span class="tx">Excel<br>Labs</span></button></div>
  <div class="xl-cap">Excel Labs</div>
 </div>
 <button class="ms-auto align-self-end pe-2 pb-2 me-1" aria-label="リボンを折りたたむ"><svg width="11" height="7"><use href="#cvl"/></svg></button>
</section>

<div class="xl-fbar d-flex align-items-center">
 <div class="xl-box xl-name d-flex align-items-center justify-content-between"><input aria-label="名前ボックス" value="D2"><svg width="11" height="7"><use href="#cvl"/></svg></div>
 <svg width="20" height="12" viewBox="0 0 20 12"><path d="M9 1h2v2H9zM9 5h2v2H9zM9 9h2v2H9z" fill="#333"/></svg>
 <div class="xl-box xl-fx d-flex align-items-center justify-content-between">
  <svg width="13" height="13"><path d="M.5.5l12 12M12.500.5l-12 12" stroke="#b5b5b5" stroke-width="1.200"/></svg>
  <svg width="16" height="12"><path d="M.5 6.500l4.500 4.500L15.500.5" fill="none" stroke="#b5b5b5" stroke-width="1.200"/></svg>
  <button aria-label="関数の挿入" class="xl-serif">fx</button>
  <svg width="10" height="7"><use href="#cvl" color="#888"/></svg>
 </div>
 <div class="xl-box xl-formula flex-grow-1 d-flex align-items-center justify-content-between"><input aria-label="数式バー" value="田中太郎"><svg width="10" height="7"><use href="#cvl"/></svg></div>
</div>

<main class="xl-grid d-flex flex-grow-1">
 <div class="xl-view flex-grow-1">
  <table class="xl-sheet" id="sheet"></table>
  <div class="xl-note">⑤
⑥ [Ctrl] <span class="xl-full">＋</span> [E]</div>
 </div>
 <div class="xl-vbar"><div class="d-flex flex-column align-items-center">
  <svg width="10" height="8"><path d="M5 0l5 7.500H0z" fill="#707070"/></svg>
  <div class="xl-vthumb"></div>
  <svg width="10" height="8" class="mt-auto"><path d="M5 8l4.500-8h-9z" fill="#707070"/></svg>
 </div></div>
</main>

<div class="xl-sheets d-flex align-items-start">
 <div class="xl-nav d-flex align-items-center"><svg width="7" height="10"><path d="M6 .5L1 5l5 4.500" fill="none" stroke="#999" stroke-width="1.200"/></svg><svg width="7" height="10"><path d="M1 .5L6 5 1 9.500" fill="none" stroke="#999" stroke-width="1.200"/></svg></div>
 <a href="#" class="active"><span>氏名の分割</span></a><a href="#" class="xl-t2">メールアドレス生成</a><a href="#" class="xl-t3">年・月抽出</a><a href="#" class="xl-t4">部署分類</a>
 <button class="xl-plus" aria-label="新しいシート"><svg width="11" height="11"><path d="M5.500 0v11M0 5.500h11" stroke="#444"/></svg></button>
 <svg width="3" height="12" class="xl-dots"><path d="M0 0h2v2H0zM0 5h2v2H0zM0 10h2v2H0z" fill="#444"/></svg>
 <div class="xl-hbar d-flex align-items-center"><svg width="8" height="10"><path d="M8 0v10L0 5z" fill="#707070"/></svg><div class="xl-hthumb"></div><svg width="8" height="10" class="ms-auto"><path d="M0 0v10l8-5z" fill="#707070"/></svg></div>
</div>

<footer class="xl-status d-flex align-items-center">
 <span>準備完了</span>
 <svg width="15" height="14" viewBox="0 0 15 14" class="xl-rec"><path d="M5 12.500H.5V.5h12v4M.5 3.500h12M2.500 6h3M2.500 9h2" fill="none" stroke="#333"/><circle cx="10" cy="9" r="4.300" fill="#fff" stroke="#333"/><circle cx="10" cy="9" r="2" fill="#333"/></svg>
 <div class="ms-auto d-flex align-items-center">
  <button class="xl-vw on" aria-label="標準"><svg width="13" height="13"><path d="M.5.5h12v12H.500zM4.500.5v12M8.500.5v12M.5 4.500h12M.5 8.500h12" fill="none" stroke="#222"/></svg></button>
  <button class="xl-vw" aria-label="ページ レイアウト"><svg width="14" height="13"><path d="M.5.5h13v12H.500zM3.500 2.500h7v8h-7zM5 4.500h4M5 6.500h4M5 8.500h4" fill="none" stroke="#222"/></svg></button>
  <button class="xl-vw" aria-label="改ページ プレビュー"><svg width="14" height="13"><path d="M.5.5h13v12H.500zM.5 8.500h8v-8M4.500.5v8" fill="none" stroke="#222"/></svg></button>
  <button aria-label="縮小" class="ms-1"><svg width="9" height="9"><path d="M0 4.500h8" stroke="#222"/></svg></button>
  <input class="xl-zoom" type="range" min="10" max="190" value="102" aria-label="ズーム">
  <button aria-label="拡大"><svg width="9" height="9"><path d="M0 4.500h9M4.500 0v9" stroke="#222"/></svg></button>
  <span class="xl-pct text-end ps-1">100%</span>
 </div>
</footer>
</div>

<script>
const names=["田中 太郎","鈴木 太郎","山田 一郎","加藤 葵","佐藤 葵","小林 花子","加藤 さゆり","渡辺 翔太","伊藤 さゆり","佐藤 花子","田中 葵","山田 結衣","鈴木 葵","小林 健太","山田 大輔","佐藤 一郎","佐藤 葵","伊藤 美咲","田中 さゆり","高橋 一郎","加藤 一郎","中村 太郎","小林 太郎","山田 大輔","加藤 美咲"];
const cols=[..."ABCDEFGHIJKLMNOPQRSTUVWXY"];
let h='<colgroup><col class="c-n"><col class="c-a"><col class="c-b"><col class="c-c">'+'<col>'.repeat(22)+'</colgroup><thead><tr><th><svg width="28" height="16"><path d="M25 3v11H14z" fill="#b5b5b5"/></svg></th>';
h+=cols.map(c=>`<th scope="col"${c==="D"?' class="on"':''}>${c}</th>`).join('')+'</tr></thead><tbody>';
h+='<tr><th scope="row">1</th><td class="hd">氏名</td><td class="hd">姓</td><td class="hd">名</td>'+'<td></td>'.repeat(22)+'</tr>';
names.forEach((n,i)=>{
  const [a,b]=n.split(' ');
  h+=`<tr><th scope="row"${i?'':' class="on"'}>${i+2}</th><td>${n}</td><td>${a}</td><td>${b}</td>${i?'<td></td>':'<td class="cur">田中太郎</td>'}${'<td></td>'.repeat(21)}</tr>`;
});
document.getElementById('sheet').innerHTML=h+'</tbody>';
</script>
</body>
</html>
